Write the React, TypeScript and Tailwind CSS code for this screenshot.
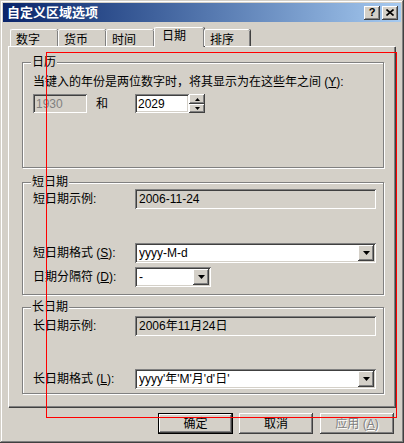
import React from 'react';

// classic win32 bevels
const raised =
  'shadow-[inset_-1px_-1px_#404040,inset_1px_1px_#ffffff,inset_-2px_-2px_#808080,inset_2px_2px_#d4d0c8]';
const sunken =
  'shadow-[inset_1px_1px_#808080,inset_-1px_-1px_#ffffff,inset_2px_2px_#404040,inset_-2px_-2px_#d4d0c8]';
const etched = 'border border-[#808080] shadow-[inset_1px_1px_0_#ffffff,1px_1px_0_#ffffff]';

const Arrow = ({ up = false }: { up?: boolean }) => (
  <svg width="7" height="4" viewBox="0 0 7 4" className={up ? 'rotate-180' : ''}>
    <path d="M0 0h7L3.5 4z" fill="#000" />
  </svg>
);

const SmallArrow = ({ up = false }: { up?: boolean }) => (
  <svg width="5" height="3" viewBox="0 0 5 3" className={up ? 'rotate-180' : ''}>
    <path d="M0 0h5L2.5 3z" fill="#000" />
  </svg>
);

const Combo = ({ w, value }: { w: string; value: string }) => (
  <div className={`${w} h-[20px] ${sunken} bg-white flex items-center pl-[4px] pr-[2px]`}>
    <span className="flex-1 truncate">{value}</span>
    <div className={`w-[16px] h-[16px] ${raised} bg-[#d4d0c8] flex items-center justify-center`}>
      <Arrow />
    </div>
  </div>
);

const Display = ({ value }: { value: string }) => (
  <div className={`w-[241px] h-[20px] ${sunken} bg-[#d4d0c8] flex items-center pl-[4px]`}>{value}</div>
);

const Group = ({ title, h, className = '', children }: { title: string; h: string; className?: string; children: React.ReactNode }) => (
  <div className={`relative w-[362px] ${h} ${etched} ${className}`}>
    <span className="absolute -top-[8px] left-[8px] bg-[#d4d0c8] px-[1px] leading-[14px]">{title}</span>
    {children}
  </div>
);

const tabs = [
  { label: '数字', w: 'w-[48px]' },
  { label: '货币', w: 'w-[48px]' },
  { label: '时间', w: 'w-[48px]' },
  { label: '日期', w: 'w-[50px]', active: true },
  { label: '排序', w: 'w-[46px]' },
];

const Button = ({ label, isDefault, disabled }: { label: React.ReactNode; isDefault?: boolean; disabled?: boolean }) => (
  <div
    className={`h-[21px] flex items-center justify-center bg-[#d4d0c8] ${
      isDefault ? 'w-[75px] border border-black' : 'w-[74px]'
    } ${disabled ? 'text-[#808080] [text-shadow:1px_1px_0_#ffffff]' : 'text-black'}`}
  >
    <div className={`w-full h-full flex items-center justify-center ${raised}`}>{label}</div>
  </div>
);

export default function App() {
  return (
    <div className="relative w-[404px] h-[443px] bg-[#d4d0c8] flex flex-col text-[12px] leading-[14px] text-black [font-family:'Liberation_Sans','Noto_Sans_CJK_SC',sans-serif] shadow-[inset_-1px_-1px_#404040,inset_1px_1px_#d4d0c8,inset_-2px_-2px_#808080,inset_2px_2px_#ffffff] overflow-hidden">
      {/* title bar */}
      <div className="mx-[3px] mt-[3px] h-[19px] flex items-center pl-[4px] pr-[3px] bg-gradient-to-r from-[#0a246a] to-[#a6caf0]">
        <span className="flex-1 text-white font-bold text-[13px] leading-[16px]">自定义区域选项</span>
        <div className="flex gap-[2px]">
          <div className={`w-[16px] h-[14px] ${raised} bg-[#d4d0c8] flex items-center justify-center font-bold text-[11px] leading-[11px] [font-family:'Liberation_Sans',sans-serif]`}>
            ?
          </div>
          <div className={`w-[16px] h-[14px] ${raised} bg-[#d4d0c8] flex items-center justify-center`}>
            <svg width="8" height="7" viewBox="0 0 8 7">
              <path d="M0.5 0.5l7 6M7.5 0.5l-7 6" stroke="#000" strokeWidth="1.6" />
            </svg>
          </div>
        </div>
      </div>

      {/* tabs */}
      <div className="relative z-10 ml-[10px] mt-[5px] -mb-[1px] h-[20px] flex items-end">
        {tabs.map((t) =>
          t.active ? (
            <div
              key={t.label}
              className={`${t.w} h-[20px] bg-[#d4d0c8] border-t border-l border-white rounded-tl-[2px] rounded-tr-[2px] shadow-[inset_-1px_0_#808080,1px_0_#404040] pl-[7px] pt-[1px]`}
            >
              {t.label}
            </div>
          ) : (
            <div
              key={t.label}
              className={`${t.w} h-[17px] mb-[1px] bg-[#d4d0c8] border-t border-l border-white rounded-tl-[2px] rounded-tr-[2px] shadow-[inset_-1px_0_#808080,inset_-2px_0_#d4d0c8,1px_0_#404040] pl-[5px] pt-[3px]`}
            >
              {t.label}
            </div>
          )
        )}
      </div>

      {/* tab panel */}
      <div className="ml-[8px] w-[387px] h-[361px] border-t border-l border-white shadow-[inset_-1px_-1px_#808080,1px_1px_#404040] pl-[13px] pt-[15px]">
        <Group title="日历" h="h-[106px]">
          <div className="pl-[10px] pt-[12px]">
            <div>当键入的年份是两位数字时，将其显示为在这些年之间 (<span className="underline">Y</span>):</div>
            <div className="flex items-center mt-[5px]">
              <div className={`w-[54px] h-[19px] ${sunken} bg-[#d4d0c8] text-[#808080] flex items-center pl-[3px]`}>1930</div>
              <span className="ml-[9px] w-[39px]">和</span>
              <div className={`w-[54px] h-[19px] ${sunken} bg-white flex items-center pl-[3px]`}>2029</div>
              <div className="w-[16px] h-[19px] flex flex-col">
                <div className={`h-[10px] ${raised} bg-[#d4d0c8] flex items-center justify-center`}>
                  <SmallArrow up />
                </div>
                <div className={`h-[9px] ${raised} bg-[#d4d0c8] flex items-center justify-center`}>
                  <SmallArrow />
                </div>
              </div>
            </div>
          </div>
        </Group>

        <Group title="短日期" h="h-[113px]" className="mt-[14px]">
          <div className="pl-[10px] pt-[6px]">
            <div className="flex items-center">
              <span className="w-[102px]">短日期示例:</span>
              <Display value="2006-11-24" />
            </div>
            <div className="flex items-center mt-[34px]">
              <span className="w-[102px]">短日期格式 (<span className="underline">S</span>):</span>
              <Combo w="w-[241px]" value="yyyy-M-d" />
            </div>
            <div className="flex items-center mt-[4px]">
              <span className="w-[102px]">日期分隔符 (<span className="underline">D</span>):</span>
              <Combo w="w-[76px]" value="-" />
            </div>
          </div>
        </Group>

        <Group title="长日期" h="h-[87px]" className="mt-[12px]">
          <div className="pl-[10px] pt-[8px]">
            <div className="flex items-center">
              <span className="w-[102px]">长日期示例:</span>
              <Display value="2006年11月24日" />
            </div>
            <div className="flex items-center mt-[33px]">
              <span className="w-[102px]">长日期格式 (<span className="underline">L</span>):</span>
              <Combo w="w-[241px]" value="yyyy'年'M'月'd'日'" />
            </div>
          </div>
        </Group>
      </div>

      {/* dialog buttons */}
      <div className="mt-[6px] flex justify-end pr-[10px] gap-[6px]">
        <Button label="确定" isDefault />
        <Button label="取消" />
        <div className="ml-[1px]">
          <Button label={<span>应用 (<span className="underline">A</span>)</span>} disabled />
        </div>
      </div>

      {/* red annotation frame */}
      <div className="absolute z-20 left-[46px] top-[52px] w-[351px] h-[366px] border-solid border-[1px] border-[#ff0000] pointer-events-none" />
    </div>
  );
}
